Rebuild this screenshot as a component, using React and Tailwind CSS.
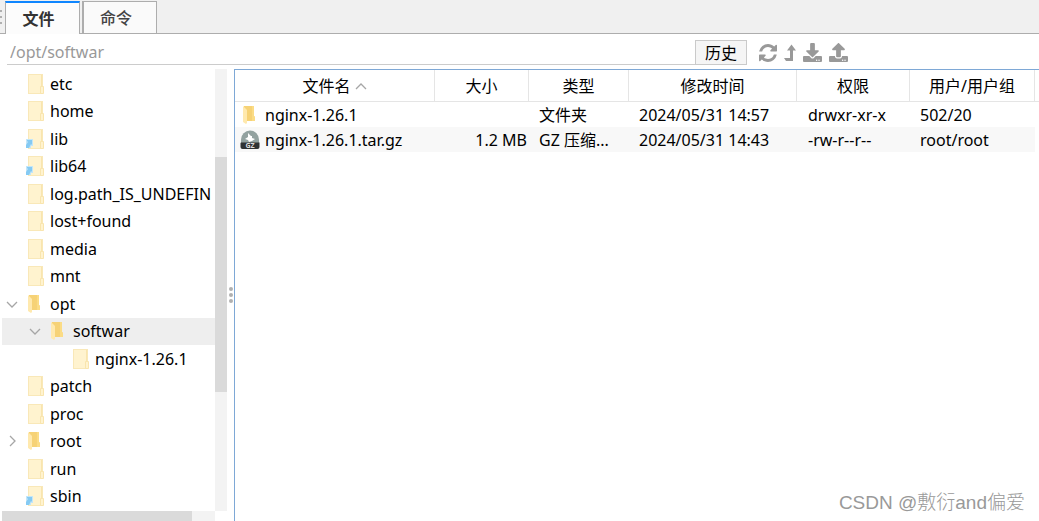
import React from 'react';
import { FaDownload, FaUpload } from 'react-icons/fa';

const tree = [
    { name: 'etc', depth: 0, icon: 'plain' },
    { name: 'home', depth: 0, icon: 'plain' },
    { name: 'lib', depth: 0, icon: 'link' },
    { name: 'lib64', depth: 0, icon: 'link' },
    { name: 'log.path_IS_UNDEFIN', depth: 0, icon: 'plain' },
    { name: 'lost+found', depth: 0, icon: 'plain' },
    { name: 'media', depth: 0, icon: 'plain' },
    { name: 'mnt', depth: 0, icon: 'plain' },
    { name: 'opt', depth: 0, icon: 'open', arrow: 'down' },
    { name: 'softwar', depth: 1, icon: 'open', arrow: 'down', selected: true },
    { name: 'nginx-1.26.1', depth: 2, icon: 'plain' },
    { name: 'patch', depth: 0, icon: 'plain' },
    { name: 'proc', depth: 0, icon: 'plain' },
    { name: 'root', depth: 0, icon: 'open', arrow: 'right' },
    { name: 'run', depth: 0, icon: 'plain' },
    { name: 'sbin', depth: 0, icon: 'link' },
];

const files = [
    { name: 'nginx-1.26.1', icon: 'folder', size: '', type: '文件夹', time: '2024/05/31 14:57', mode: 'drwxr-xr-x', owner: '502/20' },
    { name: 'nginx-1.26.1.tar.gz', icon: 'gz', size: '1.2 MB', type: 'GZ 压缩...', time: '2024/05/31 14:43', mode: '-rw-r--r--', owner: 'root/root' },
];

const indents = ['pl-1', 'pl-[27px]', 'pl-[49px]'];

function FolderIcon({ link }) {
    return (
        <svg width="20" height="20" viewBox="0 0 20 20" className="shrink-0">
            <rect x="3.5" y="0.5" width="14" height="19" fill="#fff3cf" stroke="#f9e8b8" />
            <path d="M16 1h1v11h-1z" fill="#f9e5ae" />
            <path d="M15.5 12.5h3v7h-3z" fill="#fff3cf" stroke="#f9e5ae" />
            {link && (
                <g>
                    <path d="M1 10h7v7H6v2H1z" fill="#c4e6f8" />
                    <path d="M2 11h5v5l-1-1-2 4H1v-3l2-3-1-1z" fill="#85caf3" />
                </g>
            )}
        </svg>
    );
}

function OpenFolderIcon() {
    return (
        <svg width="20" height="20" viewBox="0 0 20 20" className="shrink-0">
            <path d="M4 1h10v10l1 1v4H4z" fill="#f6d276" />
            <path d="M12 1h2v10l1 1v4h-3z" fill="#fbdc86" />
            <path d="M3 1l4 4v13l-1 1-3-2z" fill="#ffe9ae" />
        </svg>
    );
}

function GzIcon() {
    return (
        <svg width="20" height="20" viewBox="0 0 20 20" className="shrink-0">
            <path d="M1 13V9.500a9 9 0 0 1 18 0V13z" fill="#93a2a0" />
            <path d="M8 3l3 3 1 0 0 2 3 1-3 2-3 1-1-2-3-1 3-2z" fill="#fff" />
            <path d="M1 12.500h18.500V17a2 2 0 0 1-2 2h-15a2 2 0 0 1-2-2v-4z" fill="#303334" />
            <text x="10" y="18" textAnchor="middle" fontSize="7" fontWeight="700" fill="#ddd">GZ</text>
        </svg>
    );
}

function Chevron({ dir }) {
    const paths = { down: 'M1 4l5 5 5-5', right: 'M4 1l5 5-5 5', up: 'M1 9l5-5 5 5' };
    return (
        <svg width="12" height="12" viewBox="0 0 12 12" fill="none" stroke="#a6a6a6" strokeWidth="1.3" className="inline-block shrink-0">
            <path d={paths[dir]} />
        </svg>
    );
}

function RefreshIcon() {
    return (
        <svg width="18" height="18" viewBox="0 0 1536 1536" fill="currentColor">
            <path d="M1511 928q0 5-1 7-64 268-268 434.500T764 1536q-146 0-282.500-55T238 1324l-129 129q-19 19-45 19t-45-19-19-45V960q0-26 19-45t45-19h448q26 0 45 19t19 45-19 45l-137 137q71 66 161 102t187 36q134 0 250-65t186-179q11-17 53-117 8-23 30-23h192q13 0 22.500 9.500t9.500 22.500zm25-800v448q0 26-19 45t-45 19h-448q-26 0-45-19t-19-45 19-45l138-138Q969 256 768 256q-134 0-250 65T332 500q-11 17-53 117-8 23-30 23H50q-13 0-22.500-9.500T18 608v-7q65-268 270-434.500T768 0q146 0 284 55.500T1297 212l130-129q19-19 45-19t45 19 19 45z" />
        </svg>
    );
}

function LevelUpIcon() {
    return (
        <svg width="12" height="18" viewBox="0 0 12 18" fill="currentColor">
            <path d="M7.500 0.500L12 6.500H9V17H2L0 14h6V6.500H3z" />
        </svg>
    );
}

function TreePane() {
    return (
        <aside className="flex w-[227px] shrink-0 flex-col">
            <div className="flex flex-1">
                <ul className="flex min-w-0 flex-1 flex-col py-px pl-0.5">
                    {tree.map((node) => (
                        <li
                            key={node.name}
                            className={`flex flex-1 items-center overflow-hidden whitespace-nowrap ${indents[node.depth]} ${node.selected ? 'bg-[#eeeeee]' : ''}`}
                        >
                            <span className="flex w-[19px] shrink-0 items-center">
                                {node.arrow && <Chevron dir={node.arrow} />}
                            </span>
                            {node.icon === 'open' ? <OpenFolderIcon /> : <FolderIcon link={node.icon === 'link'} />}
                            <span className="pl-[5px]">{node.name}</span>
                        </li>
                    ))}
                </ul>
                <div className="flex w-3 flex-col bg-[#f3f3f3]">
                    <div className="h-1/5" />
                    <div className="h-[53%] bg-[#dadada]" />
                </div>
            </div>
            <div className="flex h-2.5 pl-0.5 pr-3">
                <div className="flex-1 bg-[#f3f3f3]">
                    <div className="h-full w-[89%] bg-[#dadada]" />
                </div>
            </div>
        </aside>
    );
}

function FileTable() {
    return (
        <table className="w-full table-fixed border-separate border-spacing-0 whitespace-nowrap">
            <colgroup>
                <col className="w-[200px]" />
                <col className="w-[94px]" />
                <col className="w-[100px]" />
                <col className="w-[168px]" />
                <col className="w-[113px]" />
                <col className="w-[125px]" />
                <col />
            </colgroup>
            <thead>
                <tr className="h-8 *:border-b *:not-last:border-r *:border-[#e5e5e5] *:p-0 *:font-normal">
                    <th>
                        <span className="flex items-center justify-center gap-1">文件名 <Chevron dir="up" /></span>
                    </th>
                    <th>大小</th>
                    <th>类型</th>
                    <th>修改时间</th>
                    <th>权限</th>
                    <th>用户/用户组</th>
                    <td />
                </tr>
            </thead>
            <tbody>
                {files.map((file) => (
                    <tr key={file.name} className="h-[25px] even:*:not-last:bg-[#f8f8f8] *:p-0 *:leading-6">
                        <td>
                            <span className="flex items-center gap-[5px] pl-[5px]">
                                {file.icon === 'gz' ? <GzIcon /> : <OpenFolderIcon />}
                                {file.name}
                            </span>
                        </td>
                        <td className="text-right"><span className="pr-0.5">{file.size}</span></td>
                        <td><span className="pl-2.5">{file.type}</span></td>
                        <td><span className="pl-2.5">{file.time}</span></td>
                        <td><span className="pl-[11px]">{file.mode}</span></td>
                        <td><span className="pl-2.5">{file.owner}</span></td>
                        <td />
                    </tr>
                ))}
            </tbody>
        </table>
    );
}

export default function App() {
    return (
        <div className="relative flex min-h-screen flex-col overflow-hidden bg-white font-['Noto_Sans','Noto_Sans_CJK_SC',sans-serif] text-base leading-6 text-black">
            <div className="flex h-[34px] shrink-0 items-end bg-[#f0f0f0]">
                <div className="flex h-full w-[5px] flex-col justify-center gap-1 border-b border-[#adadad]">
                    <i className="size-0.5 bg-[#b0b0b0]" />
                    <i className="size-0.5 bg-[#b0b0b0]" />
                    <i className="size-0.5 bg-[#b0b0b0]" />
                </div>
                <button className="h-[33px] w-[75px] border-x border-t-2 border-x-[#adadad] border-t-[#0f86ff] bg-[#fcfcfc] pr-2 font-bold text-[#333]">文件</button>
                <div className="h-full w-0.5 border-b border-[#adadad]" />
                <button className="h-[33px] w-[75px] border border-l-2 border-[#adadad] bg-[#fafafa] pr-2 font-medium text-[#444]">命令</button>
                <div className="h-full flex-1 border-b border-[#adadad]" />
            </div>

            <div className="flex h-[35px] shrink-0 items-start pl-[7px] pr-[191px] pt-1.5">
                <input
                    aria-label="路径"
                    defaultValue="/opt/softwar"
                    className="h-[25px] min-w-0 flex-1 border-b border-[#cccccc] pl-[3px] text-[#999] outline-none"
                />
                <button className="h-[25px] w-[52px] border border-[#cacaca] bg-[#f5f5f5] leading-5">历史</button>
                <div className="flex h-[25px] items-center gap-[7px] pl-3 text-[#999]">
                    <button aria-label="刷新"><RefreshIcon /></button>
                    <button aria-label="上级目录"><LevelUpIcon /></button>
                    <button aria-label="下载"><FaDownload size={19} /></button>
                    <button aria-label="上传"><FaUpload size={19} /></button>
                </div>
            </div>

            <div className="flex flex-1">
                <TreePane />
                <div className="flex w-[7px] shrink-0 flex-col items-center justify-center gap-0.5">
                    <i className="size-1 rounded-full bg-[#b0b0b0]" />
                    <i className="size-1 rounded-full bg-[#b0b0b0]" />
                    <i className="size-1 rounded-full bg-[#b0b0b0]" />
                </div>
                <main className="min-w-0 flex-1 border-l border-t border-[#7ea8d6]">
                    <FileTable />
                </main>
            </div>

            <div className="absolute bottom-1.5 right-3.5 font-['Liberation_Sans','Noto_Sans_CJK_SC',sans-serif] text-[19px] font-light text-[#999]">CSDN @敷衍and偏爱</div>
        </div>
    );
}
